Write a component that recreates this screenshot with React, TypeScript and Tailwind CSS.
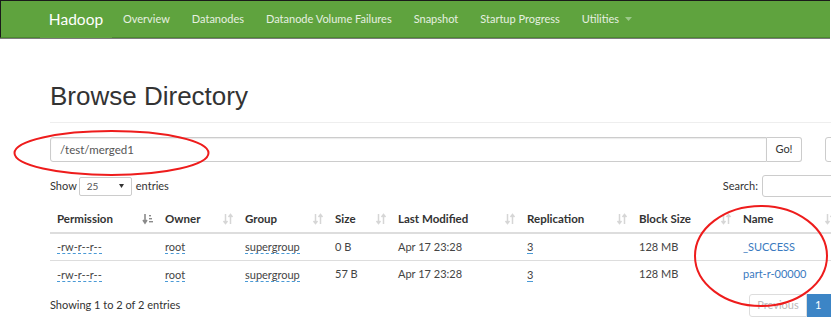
import React from "react";

const font = { fontFamily: 'Lato, "Open Sans", sans-serif' };

function SortIcon({ active }: { active?: boolean }) {
  const c = active ? "#8a8a8a" : "#d6d6d6";
  if (active) {
    return (
      <svg width="12" height="12" viewBox="0 0 12 12">
        <path d="M3 1v8M1 7l2 3 2-3" stroke={c} strokeWidth="1.6" fill="none" />
        <rect x="7" y="2" width="2" height="1.4" fill={c} />
        <rect x="7" y="5" width="3" height="1.4" fill={c} />
        <rect x="7" y="8" width="4" height="1.4" fill={c} />
      </svg>
    );
  }
  return (
    <svg width="12" height="12" viewBox="0 0 12 12">
      <path d="M3.5 1v9M1.5 8l2 2.5 2-2.5" stroke={c} strokeWidth="1.5" fill="none" />
      <path d="M8.5 11V2M6.5 4l2-2.5 2 2.5" stroke={c} strokeWidth="1.5" fill="none" />
    </svg>
  );
}

const cols = [
  { name: "Permission", w: 108, active: true },
  { name: "Owner", w: 80 },
  { name: "Group", w: 90 },
  { name: "Size", w: 63 },
  { name: "Last Modified", w: 129 },
  { name: "Replication", w: 112 },
  { name: "Block Size", w: 104 },
  { name: "Name", w: 104 },
];

const rows = [
  ["-rw-r--r--", "root", "supergroup", "0 B", "Apr 17 23:28", "3", "128 MB", "_SUCCESS"],
  ["-rw-r--r--", "root", "supergroup", "57 B", "Apr 17 23:28", "3", "128 MB", "part-r-00000"],
];

function Cell({ i, v }: { i: number; v: string }) {
  if (i <= 2)
    return (
      <span className="border-b border-dashed border-[#4a9ad6] leading-[13px] text-[#444]">{v}</span>
    );
  if (i === 5)
    return <span className="border-b border-solid border-[#4a9ad6] leading-[13px] text-[#444]">{v}</span>;
  if (i === 7) return <span className="text-[#3a7ac0]">{v}</span>;
  return <span className="text-[#444]">{v}</span>;
}

export default function App() {
  const navLinks = ["Overview", "Datanodes", "Datanode Volume Failures", "Snapshot", "Startup Progress"];
  return (
    <div className="relative w-[831px] h-[327px] overflow-hidden bg-white" style={font}>
      {/* navbar */}
      <div className="h-[38px] border-t border-[#1a1a1a] border-l border-l-[#1a1a1a] bg-[#5fa33e] border-b border-b-[#4b8a2e] shadow-[0_1px_0_#7a7a7a] flex items-stretch mr-[1px]">
        <div className="ml-[39px] w-[72px] -mb-px bg-[#5fa33e] flex items-center justify-center text-white text-[15.5px]">
          Hadoop
        </div>
        <div className="flex items-center text-[11px] text-[#e6f0e0] ml-[11px] gap-[22px]">
          {navLinks.map((l) => (
            <span key={l}>{l}</span>
          ))}
          <span className="flex items-center gap-[6px]">
            Utilities
            <svg width="7" height="4" viewBox="0 0 7 4">
              <path d="M0 0h7L3.5 4z" fill="#9cc98a" />
            </svg>
          </span>
        </div>
      </div>

      <div className="pl-[50px]">
        <h1
          className="text-[26px] leading-[30px] text-[#333] mt-[43px]"
          style={{ fontFamily: '"Liberation Sans", Arial, sans-serif' }}
        >
          Browse Directory
        </h1>
        <div className="h-px bg-[#eee] mt-[11px]" />

        <div className="flex mt-[14px] h-[25px] w-[800px]">
          <div className="shrink-0 w-[717px] border border-[#ccc] rounded-l-[3px] shadow-[inset_0_1px_1px_rgba(0,0,0,0.08)] flex items-center pl-[9px] text-[11.5px] text-[#555]">
            /test/merged1
          </div>
          <div className="shrink-0 w-[35px] border border-l-0 border-[#ccc] rounded-r-[3px] flex items-center justify-center text-[11px] text-[#333]">
            Go!
          </div>
          <div className="shrink-0 ml-[23px] w-[20px] border border-[#ccc] rounded-l-[3px]" />
        </div>

        <div className="w-[790px] flex items-center mt-[13px] h-[22px] text-[11px] text-[#333]">
          <span>Show</span>
          <div className="ml-[2px] w-[53px] h-[19px] border border-[#ccc] rounded-[2px] flex items-center justify-between px-[7px] text-[10px] text-[#555]">
            <span>25</span>
            <svg width="5" height="4" viewBox="0 0 5 4">
              <path d="M0 0h5L2.5 4z" fill="#333" />
            </svg>
          </div>
          <span className="ml-[4px]">entries</span>
          <span className="ml-auto mr-[4px]">Search:</span>
          <div className="shrink-0 w-[78px] h-[22px] border border-[#ccc] rounded-l-[3px]" />
        </div>

        {/* table */}
        <div className="mt-[8px] text-[11px] w-[790px]">
          <div className="flex h-[29px] border-b-2 border-[#ddd] font-bold text-[11.5px] text-[#333]">
            {cols.map((c) => (
              <div
                key={c.name}
                className="flex items-center justify-between pl-[7px] pr-[4px] shrink-0"
                style={{ width: c.w }}
              >
                <span>{c.name}</span>
                <SortIcon active={c.active} />
              </div>
            ))}
          </div>
          {rows.map((r, ri) => (
            <div key={ri} className={"flex h-[27px] " + (ri === 0 ? "border-b border-[#ddd]" : "")}>
              {r.map((v, i) => (
                <div key={i} className="flex items-center pl-[7px] shrink-0" style={{ width: cols[i].w }}>
                  <Cell i={i} v={v} />
                </div>
              ))}
            </div>
          ))}
        </div>

        <div className="w-[790px] flex items-center mt-[6px] h-[23px] text-[11px] text-[#333]">
          <span>Showing 1 to 2 of 2 entries</span>
          <div className="ml-auto flex h-[23px]">
            <div className="w-[58px] border border-[#ddd] rounded-l-[3px] flex items-center justify-center text-[#bbb]">
              Previous
            </div>
            <div className="w-[33px] bg-[#3c85c6] text-white flex items-center justify-start pl-[8px]">1</div>
          </div>
        </div>
      </div>

      {/* red annotation ellipses */}
      <svg className="absolute left-0 top-0 pointer-events-none" width="831" height="327">
        <ellipse cx="111.5" cy="153" rx="97" ry="22" fill="none" stroke="#ee1c1c" strokeWidth="2" />
        <ellipse cx="761" cy="256" rx="66" ry="50" fill="none" stroke="#ee1c1c" strokeWidth="2" />
      </svg>
    </div>
  );
}
